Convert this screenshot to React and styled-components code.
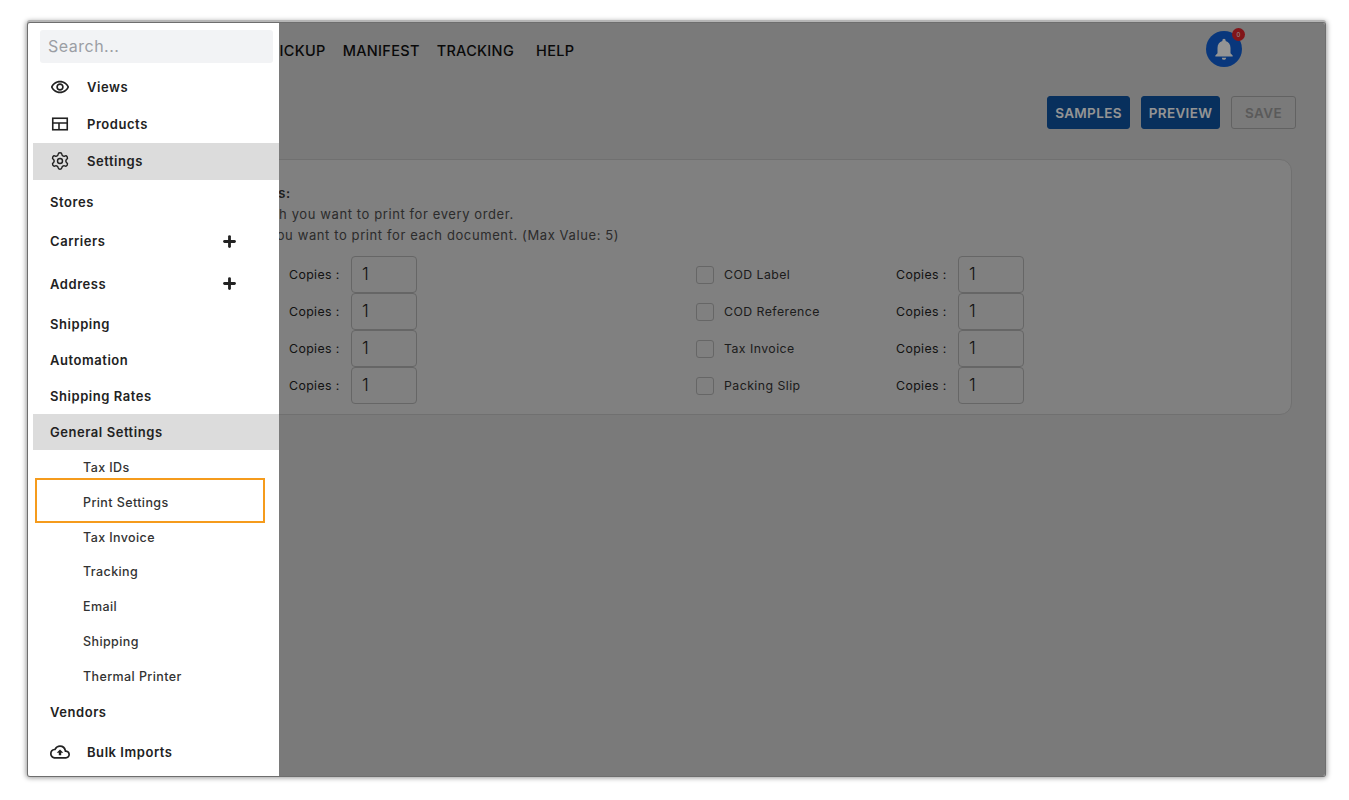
import React from "react";
import styled, { createGlobalStyle } from "styled-components";
import { Plus, Settings } from "lucide-react";
import { MdNotifications, MdOutlineCloudUpload, MdOutlineRemoveRedEye } from "react-icons/md";

const GlobalStyle = createGlobalStyle`
  html, body {
    margin: 0;
    background: #ffffff;
    font-family: Inter, "Liberation Sans", sans-serif;
  }
`;

const Frame = styled.div`
  position: relative;
  width: 1297px;
  height: 753px;
  margin: 23px 0 0 28px;
  overflow: hidden;
  border-radius: 2px;
  background: #d2d2d2;
`;

const FrameEdge = styled.div`
  position: absolute;
  top: 23px;
  left: 28px;
  width: 1297px;
  height: 753px;
  border-radius: 2px;
  box-shadow: 0 0 0 1px #6e6e6e, 0 -2px 0 1px #b5b5b5, 0 0 5px 2px rgba(0, 0, 0, 0.4);
`;

const Main = styled.div`
  display: flex;
  flex-direction: column;
  height: 100%;
  padding-left: 48px;
  padding-right: 33px;
  box-sizing: border-box;
`;

const Header = styled.header`
  display: flex;
  align-items: center;
  height: 52px;
`;

const Nav = styled.nav`
  display: flex;
  align-items: center;
  margin-left: 194px;
  padding-top: 3px;
  font-size: 14.5px;
  font-weight: 500;
  letter-spacing: 0.3px;
  color: #111;
`;

const NavLink = styled.span`
  margin-right: ${({ $gap }) => $gap || 17}px;
`;

const BellWrap = styled.div`
  position: relative;
  display: flex;
  align-items: center;
  justify-content: center;
  width: 36px;
  height: 36px;
  margin-left: auto;
  margin-right: 50px;
  border-radius: 50%;
  background: #1160d6;
  color: #ffffff;
`;

const Badge = styled.span`
  position: absolute;
  top: -3px;
  right: -3px;
  width: 13px;
  height: 13px;
  border-radius: 50%;
  background: #e0252c;
  color: #fff;
  font-size: 6px;
  line-height: 13px;
  text-align: center;
`;

const Toolbar = styled.div`
  display: flex;
  justify-content: flex-end;
  gap: 11px;
  margin-top: 21px;
  margin-right: -4px;
`;

const ToolButton = styled.button`
  height: 33px;
  width: ${({ $w }) => $w}px;
  padding: 0;
  border-radius: 3px;
  box-sizing: border-box;
  font-family: inherit;
  font-size: 13.5px;
  font-weight: 600;
  letter-spacing: 0.35px;
  border: 1px solid ${({ $disabled }) => ($disabled ? "#a9a9a9" : "#0f54a0")};
  background: ${({ $disabled }) => ($disabled ? "transparent" : "#0f54a0")};
  color: ${({ $disabled }) => ($disabled ? "#9c9c9c" : "#ffffff")};
`;

const Card = styled.section`
  margin-top: 30px;
  height: 256px;
  box-sizing: border-box;
  padding: 23px 12px 0;
  border: 1px solid #c2c2c2;
  border-radius: 12px;
  background: #dcdcdc;
  color: #333;
`;

const Intro = styled.div`
  font-size: 13px;
  line-height: 21px;
  letter-spacing: 0.6px;
  color: #4c4c4c;
  margin-bottom: 10px;
`;

const IntroTitle = styled.div`
  font-weight: 600;
  color: #333;
`;

const Rows = styled.div`
  display: grid;
  grid-template-columns: 607px 1fr;
`;

const Row = styled.div`
  display: flex;
  align-items: center;
  height: 37px;
`;

const Check = styled.span`
  width: 18px;
  height: 18px;
  box-sizing: border-box;
  border: 1px solid #b0b0b0;
  border-radius: 3px;
  margin-right: 10px;
  flex: none;
`;

const DocName = styled.span`
  width: 172px;
  font-size: 12.3px;
  letter-spacing: 0.45px;
  color: #333;
`;

const CopiesLabel = styled.span`
  width: 62px;
  font-size: 12.3px;
  letter-spacing: 0.4px;
  color: #222;
`;

const CopiesInput = styled.div`
  width: 66px;
  height: 37px;
  box-sizing: border-box;
  padding-left: 10px;
  border: 1px solid #b0b0b0;
  border-radius: 4px;
  font-size: 17px;
  font-weight: 300;
  line-height: 35px;
  color: #222;
`;

const Scrim = styled.div`
  position: absolute;
  inset: 0;
  background: rgba(0, 0, 0, 0.42);
`;

const Drawer = styled.aside`
  position: absolute;
  top: 0;
  bottom: 0;
  left: 0;
  width: 251px;
  box-sizing: border-box;
  padding: 7px 0 0 5px;
  background: #ffffff;
  color: #222;
`;

const SearchBox = styled.div`
  height: 33px;
  margin: 0 6px 6px 7px;
  padding-left: 8px;
  border-radius: 3px;
  background: #f2f3f5;
  color: #9b9ea4;
  font-size: 16px;
  letter-spacing: 0.5px;
  line-height: 32px;
`;

const IconItem = styled.div`
  display: flex;
  align-items: center;
  box-sizing: border-box;
  height: ${({ $h }) => $h || 37}px;
  padding: 0 0 1px 17px;
  font-size: 13px;
  font-weight: 600;
  letter-spacing: 0.55px;
  background: ${({ $active }) => ($active ? "#dcdcdc" : "transparent")};
`;

const IconSlot = styled.span`
  display: flex;
  align-items: center;
  justify-content: center;
  width: 20px;
  margin-right: 17px;
`;

const Item = styled.div`
  display: flex;
  align-items: center;
  justify-content: space-between;
  box-sizing: border-box;
  height: ${({ $h }) => $h || 36}px;
  padding: ${({ $pt }) => $pt || 0}px 41px 0 17px;
  font-size: 13px;
  font-weight: 600;
  letter-spacing: 0.55px;
  background: ${({ $active }) => ($active ? "#dcdcdc" : "transparent")};
`;

const SubItem = styled.div`
  position: relative;
  display: flex;
  align-items: center;
  height: 34.85px;
  padding-left: 50px;
  font-size: 12.5px;
  font-weight: 500;
  letter-spacing: 0.4px;
  color: #333;
`;

const Callout = styled.span`
  position: absolute;
  top: -7px;
  bottom: -3px;
  left: 2px;
  right: 14px;
  border: 2px solid #f59b1c;
`;

function TableIcon() {
  return (
    <svg width="18" height="18" viewBox="0 0 18 18" fill="none" stroke="#222" strokeWidth="1.6">
      <rect x="1.75" y="3.25" width="14.5" height="11.5" />
      <path d="M1.75 8h14.5M8 8v6.75" />
    </svg>
  );
}

const leftDocs = ["Shipping Label", "Return Label", "Manifest", "Pick List"];
const rightDocs = ["COD Label", "COD Reference", "Tax Invoice", "Packing Slip"];
const subItems = ["Tax IDs", "Print Settings", "Tax Invoice", "Tracking", "Email", "Shipping", "Thermal Printer"];

const App = () => {
  return (
    <>
      <GlobalStyle />
      <FrameEdge />
      <Frame>
        <Main>
          <Header>
            <Nav>
              <NavLink>PICKUP</NavLink>
              <NavLink>MANIFEST</NavLink>
              <NavLink $gap={22}>TRACKING</NavLink>
              <NavLink>HELP</NavLink>
            </Nav>
            <BellWrap>
              <MdNotifications size={26} />
              <Badge>0</Badge>
            </BellWrap>
          </Header>
          <Toolbar>
            <ToolButton $w={83}>SAMPLES</ToolButton>
            <ToolButton $w={79}>PREVIEW</ToolButton>
            <ToolButton $w={65} $disabled>SAVE</ToolButton>
          </Toolbar>
          <Card>
            <Intro>
              <IntroTitle>Select Document and Copies:</IntroTitle>
              <div>Choose the documents which you want to print for every order.</div>
              <div>Choose the nos. of copies you want to print for each document. (Max Value: 5)</div>
            </Intro>
            <Rows>
              {leftDocs.map((name, i) => (
                <React.Fragment key={name}>
                  <Row>
                    <Check />
                    <DocName>{name}</DocName>
                    <CopiesLabel>Copies :</CopiesLabel>
                    <CopiesInput>1</CopiesInput>
                  </Row>
                  <Row>
                    <Check />
                    <DocName>{rightDocs[i]}</DocName>
                    <CopiesLabel>Copies :</CopiesLabel>
                    <CopiesInput>1</CopiesInput>
                  </Row>
                </React.Fragment>
              ))}
            </Rows>
          </Card>
        </Main>
        <Scrim />
        <Drawer>
          <SearchBox>Search...</SearchBox>
          <IconItem>
            <IconSlot><MdOutlineRemoveRedEye size={20} /></IconSlot>
            Views
          </IconItem>
          <IconItem>
            <IconSlot><TableIcon /></IconSlot>
            Products
          </IconItem>
          <IconItem $active>
            <IconSlot><Settings size={20} strokeWidth={1.7} /></IconSlot>
            Settings
          </IconItem>
          <Item $h={43}>Stores</Item>
          <Item $h={36}>Carriers <Plus size={17} strokeWidth={4} /></Item>
          <Item $h={47} $pt={2}>Address <Plus size={17} strokeWidth={4} /></Item>
          <Item>Shipping</Item>
          <Item>Automation</Item>
          <Item>Shipping Rates</Item>
          <Item $active>General Settings</Item>
          {subItems.map((name) => (
            <SubItem key={name}>
              {name}
              {name === "Print Settings" && <Callout />}
            </SubItem>
          ))}
          <Item>Vendors</Item>
          <IconItem $h={45}>
            <IconSlot><MdOutlineCloudUpload size={22} /></IconSlot>
            Bulk Imports
          </IconItem>
        </Drawer>
      </Frame>
    </>
  );
};

export default App;
